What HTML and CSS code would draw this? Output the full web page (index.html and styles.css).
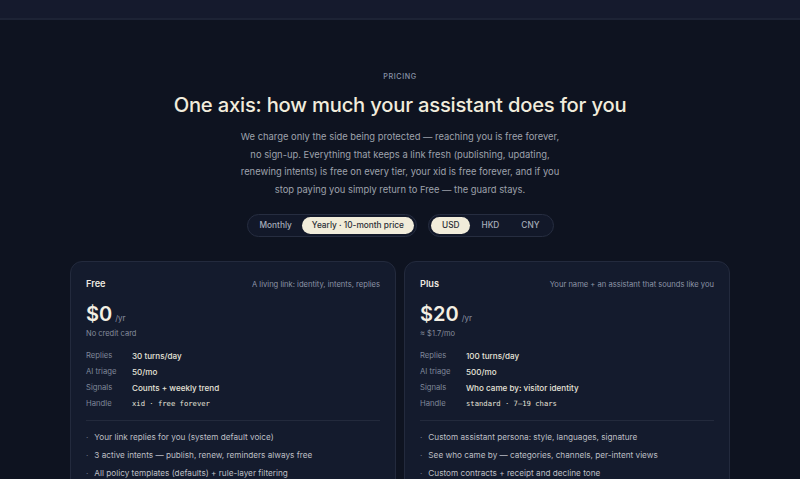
FILE: index.html
```html
<!DOCTYPE html>
<html lang="en">
<head>
    <meta charset="UTF-8">
    <meta name="viewport" content="width=device-width, initial-scale=1.0">
    <title>Pricing</title>
    <link rel="stylesheet" href="styles.css">
</head>
<body>
    <div class="topbar"></div>

    <section class="pricing">
        <div class="eyebrow">PRICING</div>
        <h1>One axis: how much your assistant does for you</h1>
        <p class="lead">We charge only the side being protected — reaching you is free forever, no sign-up. Everything that keeps a link fresh (publishing, updating, renewing intents) is free on every tier, your xid is free forever, and if you stop paying you simply return to Free — the guard stays.</p>

        <div class="toggles">
            <div class="seg">
                <button>Monthly</button>
                <button class="on">Yearly · 10-month price</button>
            </div>
            <div class="seg currency">
                <button class="on">USD</button>
                <button>HKD</button>
                <button>CNY</button>
            </div>
        </div>

        <div class="plans">
            <div class="plan">
                <div class="plan-head">
                    <span class="plan-name">Free</span>
                    <span class="plan-tag">A living link: identity, intents, replies</span>
                </div>
                <div class="price"><span class="amount">$0</span><span class="per">/yr</span></div>
                <div class="note">No credit card</div>
                <dl class="specs">
                    <dt>Replies</dt><dd>30 turns/day</dd>
                    <dt>AI triage</dt><dd>50/mo</dd>
                    <dt>Signals</dt><dd>Counts + weekly trend</dd>
                    <dt>Handle</dt><dd class="mono">xid · free forever</dd>
                </dl>
                <ul class="perks">
                    <li>Your link replies for you (system default voice)</li>
                    <li>3 active intents — publish, renew, reminders always free</li>
                    <li>All policy templates (defaults) + rule-layer filtering</li>
                </ul>
            </div>

            <div class="plan">
                <div class="plan-head">
                    <span class="plan-name">Plus</span>
                    <span class="plan-tag">Your name + an assistant that sounds like you</span>
                </div>
                <div class="price"><span class="amount">$20</span><span class="per">/yr</span></div>
                <div class="note">≈ $1.7/mo</div>
                <dl class="specs">
                    <dt>Replies</dt><dd>100 turns/day</dd>
                    <dt>AI triage</dt><dd>500/mo</dd>
                    <dt>Signals</dt><dd>Who came by: visitor identity</dd>
                    <dt>Handle</dt><dd class="mono">standard · 7–19 chars</dd>
                </dl>
                <ul class="perks">
                    <li>Custom assistant persona: style, languages, signature</li>
                    <li>See who came by — categories, channels, per-intent views</li>
                    <li>Custom contracts + receipt and decline tone</li>
                </ul>
            </div>
        </div>
    </section>
</body>
</html>
```

FILE: styles.css
```css
body {
    margin: 0;
    font-family: Inter, "Noto Sans", sans-serif;
    background-color: #0e1320;
    color: #e9e6dc;
    overflow: hidden;
}
.topbar {
    height: 18px;
    background-color: #151a2d;
    border-bottom: 2px solid #1d2335;
}
.pricing {
    display: flex;
    flex-direction: column;
    align-items: center;
    padding-top: 52px;
}
.eyebrow {
    font-size: 7.2px;
    line-height: 10px;
    font-weight: 500;
    letter-spacing: 0.08em;
    color: #8a93a8;
}
h1 {
    margin: 10px 0 0;
    font-size: 20.2px;
    line-height: 26px;
    font-weight: 500;
    letter-spacing: -0.01em;
    color: #f1ecdc;
}
.lead {
    width: 330px;
    margin: 10px 0 0;
    font-size: 9.4px;
    line-height: 17.7px;
    text-align: center;
    color: #9ea2ac;
}
.toggles {
    display: flex;
    gap: 11px;
    margin-top: 15px;
}
.seg {
    display: flex;
    padding: 2px;
    background-color: #121829;
    border: 1px solid #262d40;
    border-radius: 12px;
}
.seg button {
    height: 17px;
    padding: 0 10px;
    border: 0;
    border-radius: 9px;
    background: none;
    font-family: inherit;
    font-size: 8.3px;
    font-weight: 500;
    color: #a6acb9;
}
.currency button {
    padding: 0 11px;
}
.seg button.on {
    background-color: #f1ecda;
    color: #2b2e36;
}
.plans {
    display: grid;
    grid-template-columns: 1fr 1fr;
    gap: 8px;
    width: 660px;
    margin-top: 24px;
}
.plan {
    height: 240px;
    padding: 15px 15px 0;
    background-color: #141b2d;
    border: 1px solid #232a3d;
    border-radius: 12px;
}
.plan-head {
    display: flex;
    justify-content: space-between;
    align-items: baseline;
    line-height: 14px;
}
.plan-name {
    font-size: 9.2px;
    font-weight: 600;
    color: #ece9e0;
}
.plan-tag {
    font-size: 7.6px;
    color: #8c94a6;
}
.price {
    display: flex;
    align-items: baseline;
    gap: 3px;
    margin-top: 10px;
    line-height: 24px;
}
.amount {
    font-size: 20px;
    font-weight: 600;
    color: #f3efe3;
}
.per {
    font-size: 8px;
    color: #8a91a2;
}
.note {
    margin-top: -2px;
    font-size: 7.5px;
    line-height: 12px;
    color: #858c9c;
}
.specs {
    display: grid;
    grid-template-columns: 46px 1fr;
    margin: 8px 0 0;
    padding-bottom: 8px;
    border-bottom: 1px solid #232a3c;
    line-height: 16px;
}
.specs dt {
    font-size: 7.7px;
    color: #7f8799;
}
.specs dd {
    margin: 0;
    font-size: 8.1px;
    font-weight: 500;
    color: #e7e4da;
}
.specs dd.mono {
    font-family: "DejaVu Sans Mono", monospace;
    font-size: 7.2px;
}
.perks {
    list-style: none;
    margin: 0;
    padding: 7px 0 0;
    line-height: 18px;
}
.perks li {
    font-size: 8.2px;
    color: #bdbfc4;
}
.perks li::before {
    content: "·";
    margin-right: 6px;
    color: #6c7385;
}
```
